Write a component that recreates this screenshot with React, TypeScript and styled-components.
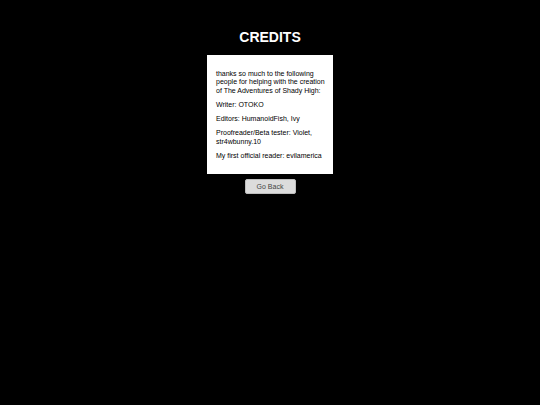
import styled, { createGlobalStyle } from "styled-components";

const GlobalStyle = createGlobalStyle`
    html, body {
        margin: 0;
        padding: 0;
        background-color: #000000;
    }
    body {
        font-family: "Liberation Sans", Arial, sans-serif;
    }
`;

const Page = styled.div`
    min-height: 405px;
    display: flex;
    flex-direction: column;
    align-items: center;
    padding-top: 29px;
    box-sizing: border-box;
`;

const Title = styled.h1`
    margin: 0 0 10px 0;
    font-size: 14px;
    line-height: 16px;
    font-weight: bold;
    color: #ffffff;
`;

const Card = styled.div`
    width: 126px;
    box-sizing: border-box;
    padding: 9px 5px 8px 9px;
    background-color: #ffffff;
    color: #000000;
`;

const Line = styled.p`
    margin: 6px 0;
    font-size: 7px;
    line-height: 8.3px;
`;

const BackButton = styled.button`
    margin-top: 5px;
    width: 51px;
    height: 15px;
    padding: 0;
    border: 1px solid #bdbdbd;
    border-radius: 2px;
    background-color: #dcdcdc;
    color: #444444;
    font-family: "Liberation Sans", Arial, sans-serif;
    font-size: 7px;
    cursor: pointer;
`;

const lines = [
    "thanks so much to the following people for helping with the creation of The Adventures of Shady High:",
    "Writer: OTOKO",
    "Editors: HumanoidFish, Ivy",
    "Proofreader/Beta tester: Violet, str4wbunny.10",
    "My first official reader: evilamerica",
];

function App() {
    return (
        <>
            <GlobalStyle />
            <Page>
                <Title>CREDITS</Title>
                <Card>
                    {lines.map((text) => (
                        <Line key={text}>{text}</Line>
                    ))}
                </Card>
                <BackButton>Go Back</BackButton>
            </Page>
        </>
    );
}

export default App;
